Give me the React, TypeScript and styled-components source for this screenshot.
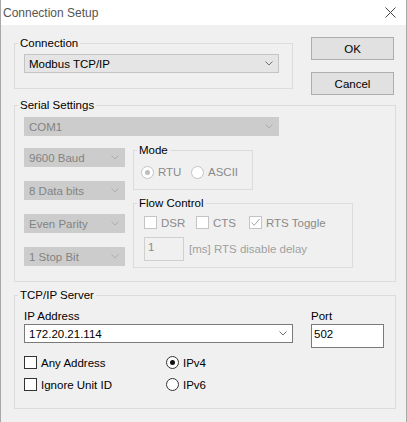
import styled, { createGlobalStyle } from "styled-components";

const GlobalStyle = createGlobalStyle`
  html, body {
    margin: 0;
    padding: 0;
    background: #ffffff;
  }
  body {
    font-family: "Liberation Sans", Arial, sans-serif;
    font-size: 11.5px;
    color: #000000;
  }
  * {
    box-sizing: border-box;
  }
`;

function Chevron({ color }: { color: string }) {
  return (
    <svg width="8" height="5" viewBox="0 0 8 5">
      <path d="M0.5 0.5 L4 4 L7.5 0.5" fill="none" stroke={color} strokeWidth="1" />
    </svg>
  );
}

function CloseIcon() {
  return (
    <svg width="11" height="11" viewBox="0 0 11 11">
      <path d="M0.5 0.5 L10.5 10.5 M10.5 0.5 L0.5 10.5" stroke="#444" strokeWidth="1" />
    </svg>
  );
}

type ComboKind = "enabled" | "disabled" | "edit";

function Combo({ text, kind, width }: { text: string; kind: ComboKind; width: number }) {
  return (
    <ComboBox $kind={kind} $width={width}>
      <span>{text}</span>
      <Chevron color={kind === "disabled" ? "#acacac" : "#707070"} />
    </ComboBox>
  );
}

function Check({ label, checked, disabled }: { label: string; checked?: boolean; disabled?: boolean }) {
  return (
    <Option $disabled={disabled}>
      <CheckBox $disabled={disabled}>
        {checked && (
          <svg width="11" height="11" viewBox="0 0 11 11">
            <path d="M1.5 5.5 L4.2 8.3 L9.5 2" fill="none" stroke={disabled ? "#a8a8a8" : "#222"} strokeWidth="1" />
          </svg>
        )}
      </CheckBox>
      {label}
    </Option>
  );
}

function Radio({ label, checked, disabled }: { label: string; checked?: boolean; disabled?: boolean }) {
  return (
    <Option $disabled={disabled}>
      <RadioDot $checked={checked} $disabled={disabled} />
      {label}
    </Option>
  );
}

export default function App() {
  return (
    <>
      <GlobalStyle />
      <Window>
        <TitleBar>
          <Title>Connection Setup</Title>
          <CloseIcon />
        </TitleBar>
        <Body>
          <TopRow>
            <Group $width={279}>
              <Legend>Connection</Legend>
              <ConnectionContent>
                <Combo text="Modbus TCP/IP" kind="enabled" width={255} />
              </ConnectionContent>
            </Group>
            <ButtonColumn>
              <Button>OK</Button>
              <Button>Cancel</Button>
            </ButtonColumn>
          </TopRow>

          <SerialGroup>
            <Legend>Serial Settings</Legend>
            <SerialContent>
              <Combo text="COM1" kind="disabled" width={255} />
              <SerialRow>
                <SerialLeft>
                  <Combo text="9600 Baud" kind="disabled" width={101} />
                  <Combo text="8 Data bits" kind="disabled" width={101} />
                  <Combo text="Even Parity" kind="disabled" width={101} />
                  <Combo text="1 Stop Bit" kind="disabled" width={101} />
                </SerialLeft>
                <SerialRight>
                  <Group $width={120}>
                    <Legend>Mode</Legend>
                    <ModeContent>
                      <Radio label="RTU" checked disabled />
                      <Radio label="ASCII" disabled />
                    </ModeContent>
                  </Group>
                  <FlowGroup $width={220}>
                    <Legend>Flow Control</Legend>
                    <FlowContent>
                      <FlowChecks>
                        <Check label="DSR" disabled />
                        <Check label="CTS" disabled />
                        <Check label="RTS Toggle" checked disabled />
                      </FlowChecks>
                      <DelayRow>
                        <DelayInput>1</DelayInput>
                        <DelayLabel>[ms] RTS disable delay</DelayLabel>
                      </DelayRow>
                    </FlowContent>
                  </FlowGroup>
                </SerialRight>
              </SerialRow>
            </SerialContent>
          </SerialGroup>

          <TcpGroup>
            <Legend>TCP/IP Server</Legend>
            <TcpContent>
              <FieldGrid>
                <FieldLabel>IP Address</FieldLabel>
                <FieldLabel>Port</FieldLabel>
                <Combo text="172.20.21.114" kind="edit" width={269} />
                <PortInput>502</PortInput>
              </FieldGrid>
              <OptionGrid>
                <Check label="Any Address" />
                <Radio label="IPv4" checked />
                <Check label="Ignore Unit ID" />
                <Radio label="IPv6" />
              </OptionGrid>
            </TcpContent>
          </TcpGroup>
        </Body>
      </Window>
    </>
  );
}

const Window = styled.div`
  width: 407px;
  height: 422px;
  display: flex;
  flex-direction: column;
  border-left: 1px solid #a8a8a8;
  border-right: 1px solid #a8a8a8;
  background: #f0f0f0;
`;

const TitleBar = styled.div`
  height: 25px;
  flex: none;
  display: flex;
  align-items: center;
  justify-content: space-between;
  padding: 0 10px 0 2px;
  background: #ffffff;
`;

const Title = styled.div`
  font-size: 12px;
  color: #555555;
`;

const Body = styled.div`
  flex: 1;
  display: flex;
  flex-direction: column;
  padding: 11px 10px 0 13px;
`;

const TopRow = styled.div`
  display: flex;
  align-items: flex-start;
`;

const Group = styled.fieldset<{ $width?: number }>`
  margin: 0;
  padding: 0;
  min-width: 0;
  border: 1px solid #dcdcdc;
  ${(p) => (p.$width ? `width: ${p.$width}px;` : "")}
`;

const Legend = styled.legend`
  margin-left: 3px;
  padding: 0 2px;
  line-height: 14px;
  font-size: 11.5px;
  color: #000000;
`;

const ConnectionContent = styled.div`
  padding: 4px 0 15px 9px;
`;

const ButtonColumn = styled.div`
  width: 83px;
  margin-left: 18px;
  padding-top: 1px;
  display: flex;
  flex-direction: column;
  gap: 12px;
`;

const Button = styled.div`
  height: 23px;
  display: flex;
  align-items: center;
  justify-content: center;
  background: #e1e1e1;
  border: 1px solid #adadad;
  color: #000000;
`;

const ComboBox = styled.div<{ $kind: ComboKind; $width: number }>`
  width: ${(p) => p.$width}px;
  height: 19px;
  display: flex;
  align-items: center;
  justify-content: space-between;
  padding: 0 5px 0 4px;
  background: ${(p) => (p.$kind === "edit" ? "#ffffff" : p.$kind === "enabled" ? "#e5e5e5" : "#cccccc")};
  border: 1px solid
    ${(p) => (p.$kind === "edit" ? "#7a7a7a" : p.$kind === "enabled" ? "#c4c4c4" : "#cccccc")};
  color: ${(p) => (p.$kind === "disabled" ? "#838383" : "#000000")};
`;

const SerialGroup = styled(Group)`
  margin-top: 3px;
`;

const SerialContent = styled.div`
  padding: 5px 0 13px 9px;
`;

const SerialRow = styled.div`
  display: flex;
  gap: 8px;
  margin-top: 7px;
`;

const SerialLeft = styled.div`
  padding-top: 5px;
  display: flex;
  flex-direction: column;
  gap: 14px;
`;

const SerialRight = styled.div`
  display: flex;
  flex-direction: column;
  align-items: flex-start;
`;

const ModeContent = styled.div`
  display: grid;
  grid-template-columns: 50px auto;
  height: 16px;
  align-items: center;
  margin: 7px 0 9px 7px;
`;

const FlowGroup = styled(Group)`
  margin-top: 6px;
`;

const FlowContent = styled.div`
  padding: 5px 0 6px 10px;
`;

const FlowChecks = styled.div`
  display: grid;
  grid-template-columns: 52px 53px auto;
  height: 15px;
  align-items: center;
`;

const DelayRow = styled.div`
  display: flex;
  align-items: center;
  gap: 5px;
  margin-top: 7px;
`;

const DelayInput = styled.div`
  width: 40px;
  height: 24px;
  padding: 2px 3px;
  line-height: 14px;
  border: 1px solid #cfcfcf;
  background: #f0f0f0;
  color: #8a8a8a;
`;

const DelayLabel = styled.span`
  color: #a0a0a0;
`;

const Option = styled.div<{ $disabled?: boolean }>`
  display: flex;
  align-items: center;
  gap: 4px;
  height: 15px;
  white-space: nowrap;
  color: ${(p) => (p.$disabled ? "#8a8a8a" : "#000000")};
`;

const CheckBox = styled.span<{ $disabled?: boolean }>`
  width: 13px;
  height: 13px;
  flex: none;
  display: flex;
  align-items: center;
  justify-content: center;
  background: #ffffff;
  border: 1px solid ${(p) => (p.$disabled ? "#c4c4c4" : "#333333")};
`;

const RadioDot = styled.span<{ $checked?: boolean; $disabled?: boolean }>`
  position: relative;
  width: 13px;
  height: 13px;
  flex: none;
  border-radius: 50%;
  background: #ffffff;
  border: 1px solid ${(p) => (p.$disabled ? "#c4c4c4" : "#333333")};
  &::after {
    content: "";
    display: ${(p) => (p.$checked ? "block" : "none")};
    position: absolute;
    inset: 3px;
    border-radius: 50%;
    background: ${(p) => (p.$disabled ? "#bdbdbd" : "#111111")};
  }
`;

const TcpGroup = styled(Group)`
  margin-top: 6px;
`;

const TcpContent = styled.div`
  padding: 7px 0 16px 9px;
`;

const FieldGrid = styled.div`
  display: grid;
  grid-template-columns: 269px 73px;
  column-gap: 18px;
  row-gap: 1px;
  align-items: start;
`;

const FieldLabel = styled.div`
  line-height: 14px;
  color: #000000;
`;

const PortInput = styled.div`
  height: 24px;
  padding: 2px 2px;
  line-height: 14px;
  background: #ffffff;
  border: 1px solid #7a7a7a;
  color: #000000;
`;

const OptionGrid = styled.div`
  display: grid;
  grid-template-columns: 142px auto;
  row-gap: 7px;
  margin-top: 7px;
`;
